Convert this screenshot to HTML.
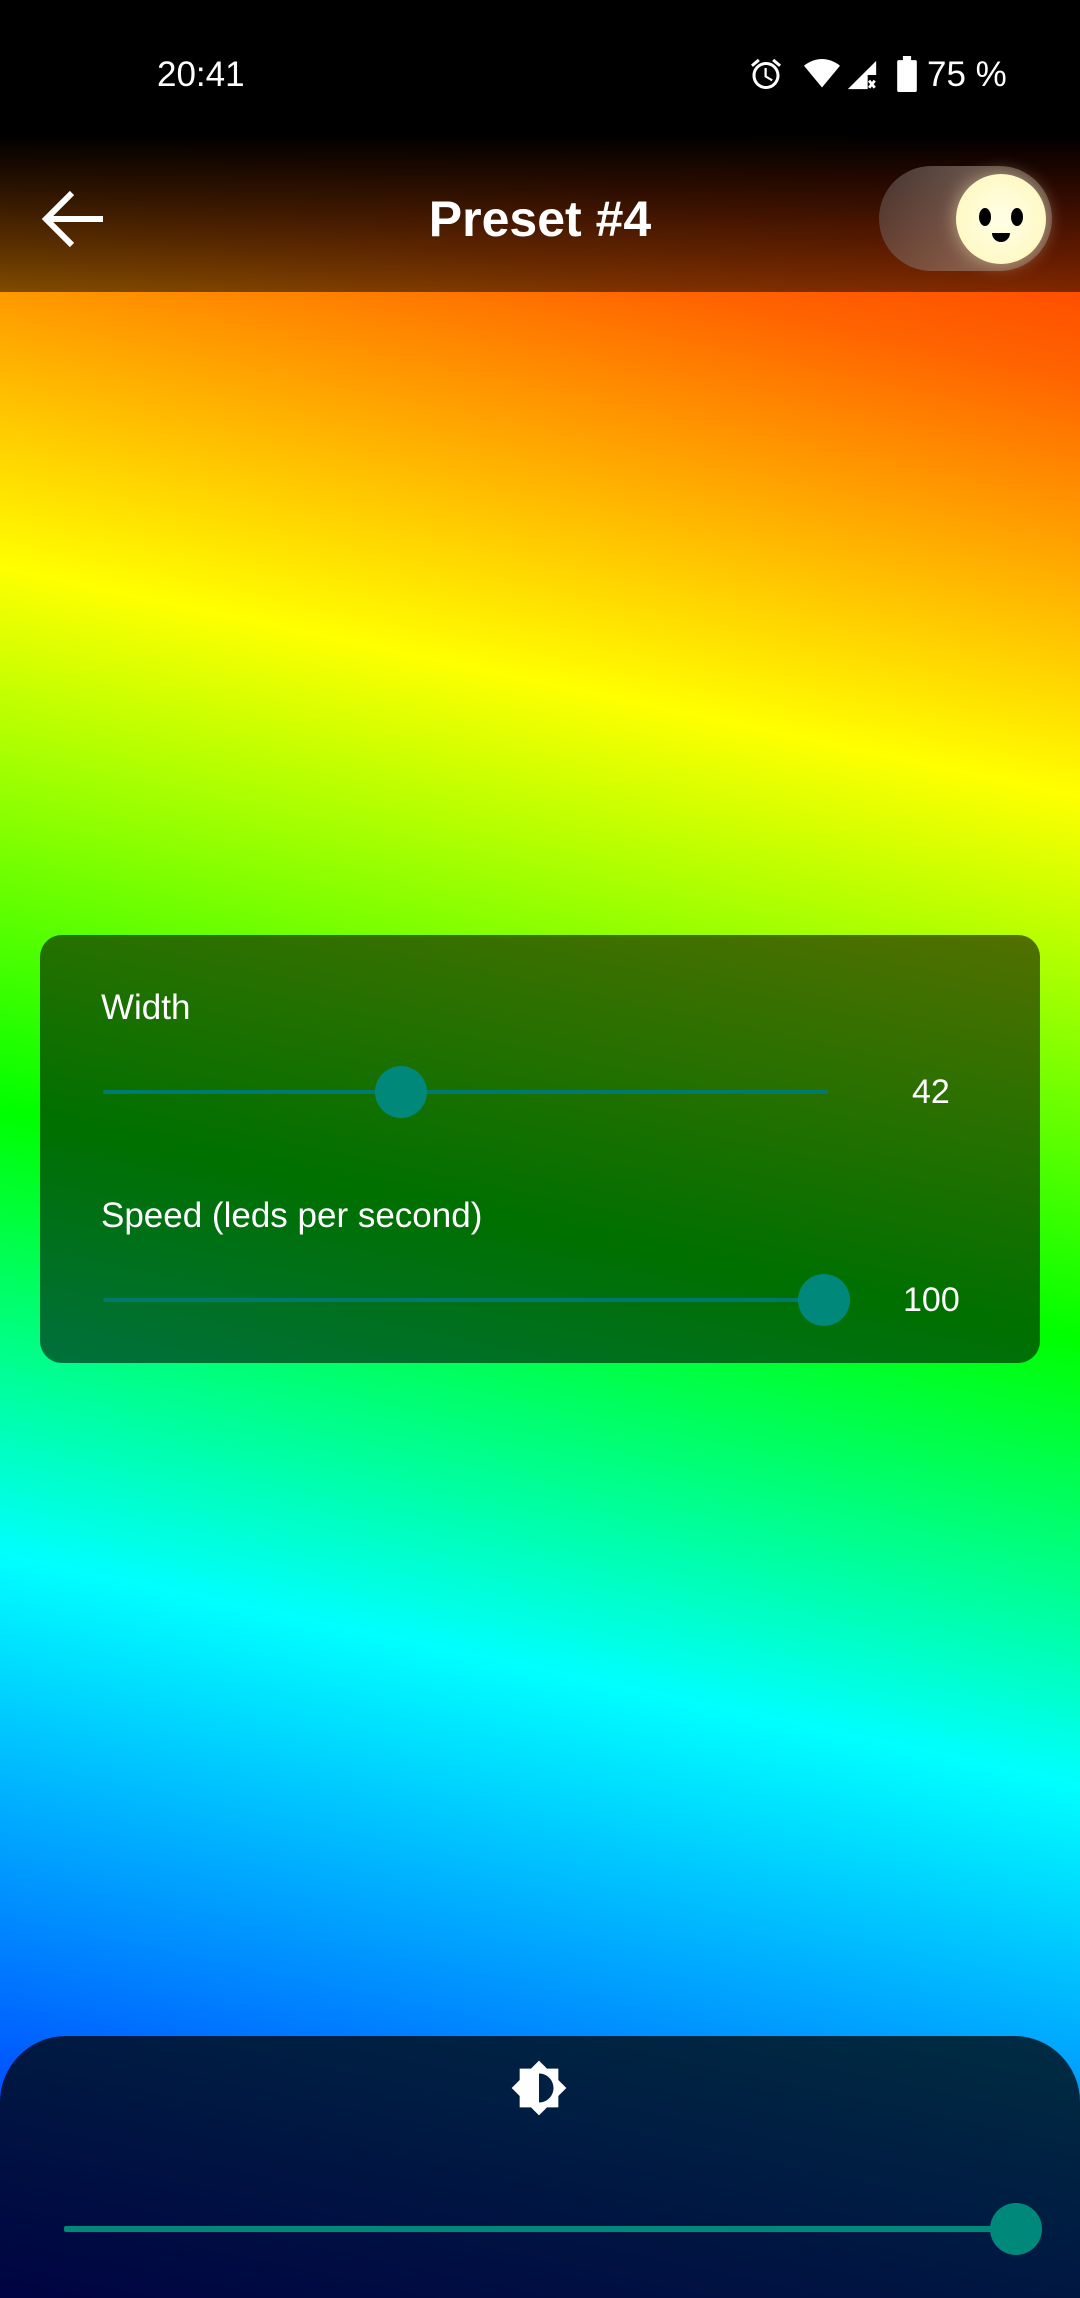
<!DOCTYPE html>
<html><head><meta charset="utf-8"><style>
*{margin:0;padding:0;box-sizing:border-box}
html,body{width:1080px;height:2298px;overflow:hidden}
body{position:relative;font-family:"Liberation Sans",Roboto,sans-serif;color:#fff;
background:linear-gradient(192deg,#ff0800 0%,#ff6400 15%,#ffff00 31.5%,#00ff00 53%,#00ffff 70.6%,#0070ff 88%,#0010ff 100%);}
.top{position:absolute;left:0;top:0;width:1080px;height:292px;background:linear-gradient(#000 0,#000 135px,rgba(0,0,0,.5) 292px)}
.time{position:absolute;left:157px;top:55px;font-size:35px;font-weight:500}
.bat{position:absolute;left:927px;top:55px;font-size:35px}
.title{position:absolute;left:0;width:1080px;text-align:center;top:190px;font-size:50px;font-weight:bold}
.sw{position:absolute;left:879px;top:166px;width:173px;height:105px;border-radius:53px;background:linear-gradient(90deg,rgba(120,110,110,.45),rgba(150,130,120,.6) 50%,rgba(140,120,110,.55))}
.thumb{position:absolute;left:956px;top:174px;width:90px;height:90px;border-radius:50%;background:radial-gradient(#ffffe8,#fff8c0 80%,#f5eeb0);box-shadow:0 0 18px rgba(255,250,200,.5)}
.card{position:absolute;left:40px;top:935px;width:1000px;height:428px;border-radius:22px;background:rgba(0,0,0,.56)}
.lbl{position:absolute;font-size:35px}
.trk{position:absolute;height:4px;background:#007a6e;border-radius:2px}
.knob{position:absolute;width:52px;height:52px;border-radius:50%;background:#00897b}
.val{position:absolute;font-size:34px}
.bot{position:absolute;left:0;top:2036px;width:1080px;height:262px;border-radius:66px 66px 0 0;background:rgba(0,0,0,.74)}
</style></head><body>
<div class="top"></div>
<div class="time">20:41</div>
<svg style="position:absolute;left:748px;top:56px" width="36" height="36" viewBox="0 0 24 24" fill="#fff"><path d="M22 5.72l-4.6-3.86-1.29 1.53 4.6 3.86L22 5.72zM7.88 3.39L6.6 1.86 2 5.71l1.29 1.53 4.59-3.85zM12.5 8H11v6l4.75 2.85.75-1.23-4-2.37V8zM12 4c-4.97 0-9 4.03-9 9s4.02 9 9 9c4.97 0 9-4.03 9-9s-4.03-9-9-9zm0 16c-3.87 0-7-3.13-7-7s3.13-7 7-7 7 3.13 7 7-3.13 7-7 7z"/></svg>
<svg style="position:absolute;left:803px;top:56px" width="38" height="36" viewBox="0 0 24 24" fill="#fff"><path d="M12 21L0 6.5C3.3 3.8 7.5 2 12 2s8.7 1.8 12 4.5L12 21z"/></svg>
<svg style="position:absolute;left:845px;top:58px" width="34" height="34" viewBox="0 0 24 24" fill="#fff"><path d="M22 2L2 22h14V12h6V2z"/><path d="M17 16l4 5M21 16l-4 5" stroke="#fff" stroke-width="2"/></svg>
<svg style="position:absolute;left:896px;top:56px" width="22" height="36" viewBox="0 0 12 22" fill="#fff"><rect x="3.5" y="0" width="5" height="3"/><rect x="0" y="2.5" width="12" height="19.5" rx="1"/></svg>
<div class="bat">75 %</div>
<svg style="position:absolute;left:40px;top:188px" width="66" height="62" viewBox="0 0 66 62"><path d="M63 31H8M32 5L6 31l26 26" stroke="#fff" stroke-width="6" fill="none"/></svg>
<div class="title">Preset #4</div>
<div class="sw"></div>
<div class="thumb"><svg width="90" height="90" viewBox="0 0 90 90"><ellipse cx="29" cy="43" rx="6" ry="9" fill="#000"/><ellipse cx="61" cy="43" rx="6" ry="9" fill="#000"/><path d="M36 59h18a9 9 0 0 1-18 0z" fill="#000"/></svg></div>
<div class="card"></div>
<div class="lbl" style="left:101px;top:988px">Width</div>
<div class="trk" style="left:103px;top:1090px;width:725px"></div>
<div class="knob" style="left:375px;top:1066px"></div>
<div class="val" style="left:912px;top:1073px">42</div>
<div class="lbl" style="left:101px;top:1196px">Speed (leds per second)</div>
<div class="trk" style="left:103px;top:1298px;width:725px"></div>
<div class="knob" style="left:798px;top:1274px"></div>
<div class="val" style="left:903px;top:1281px">100</div>
<div class="bot"></div>
<svg style="position:absolute;left:510px;top:2059px" width="58" height="58" viewBox="0 0 24 24" fill="#fff"><path d="M20 15.31L23.31 12 20 8.69V4h-4.69L12 .69 8.69 4H4v4.69L.69 12 4 15.31V20h4.69L12 23.31 15.31 20H20v-4.69zM12 18V6c3.31 0 6 2.69 6 6s-2.69 6-6 6z"/></svg>
<div class="trk" style="left:64px;top:2226px;width:950px;height:6px;background:#00897b"></div>
<div class="knob" style="left:990px;top:2203px"></div>
</body></html>
